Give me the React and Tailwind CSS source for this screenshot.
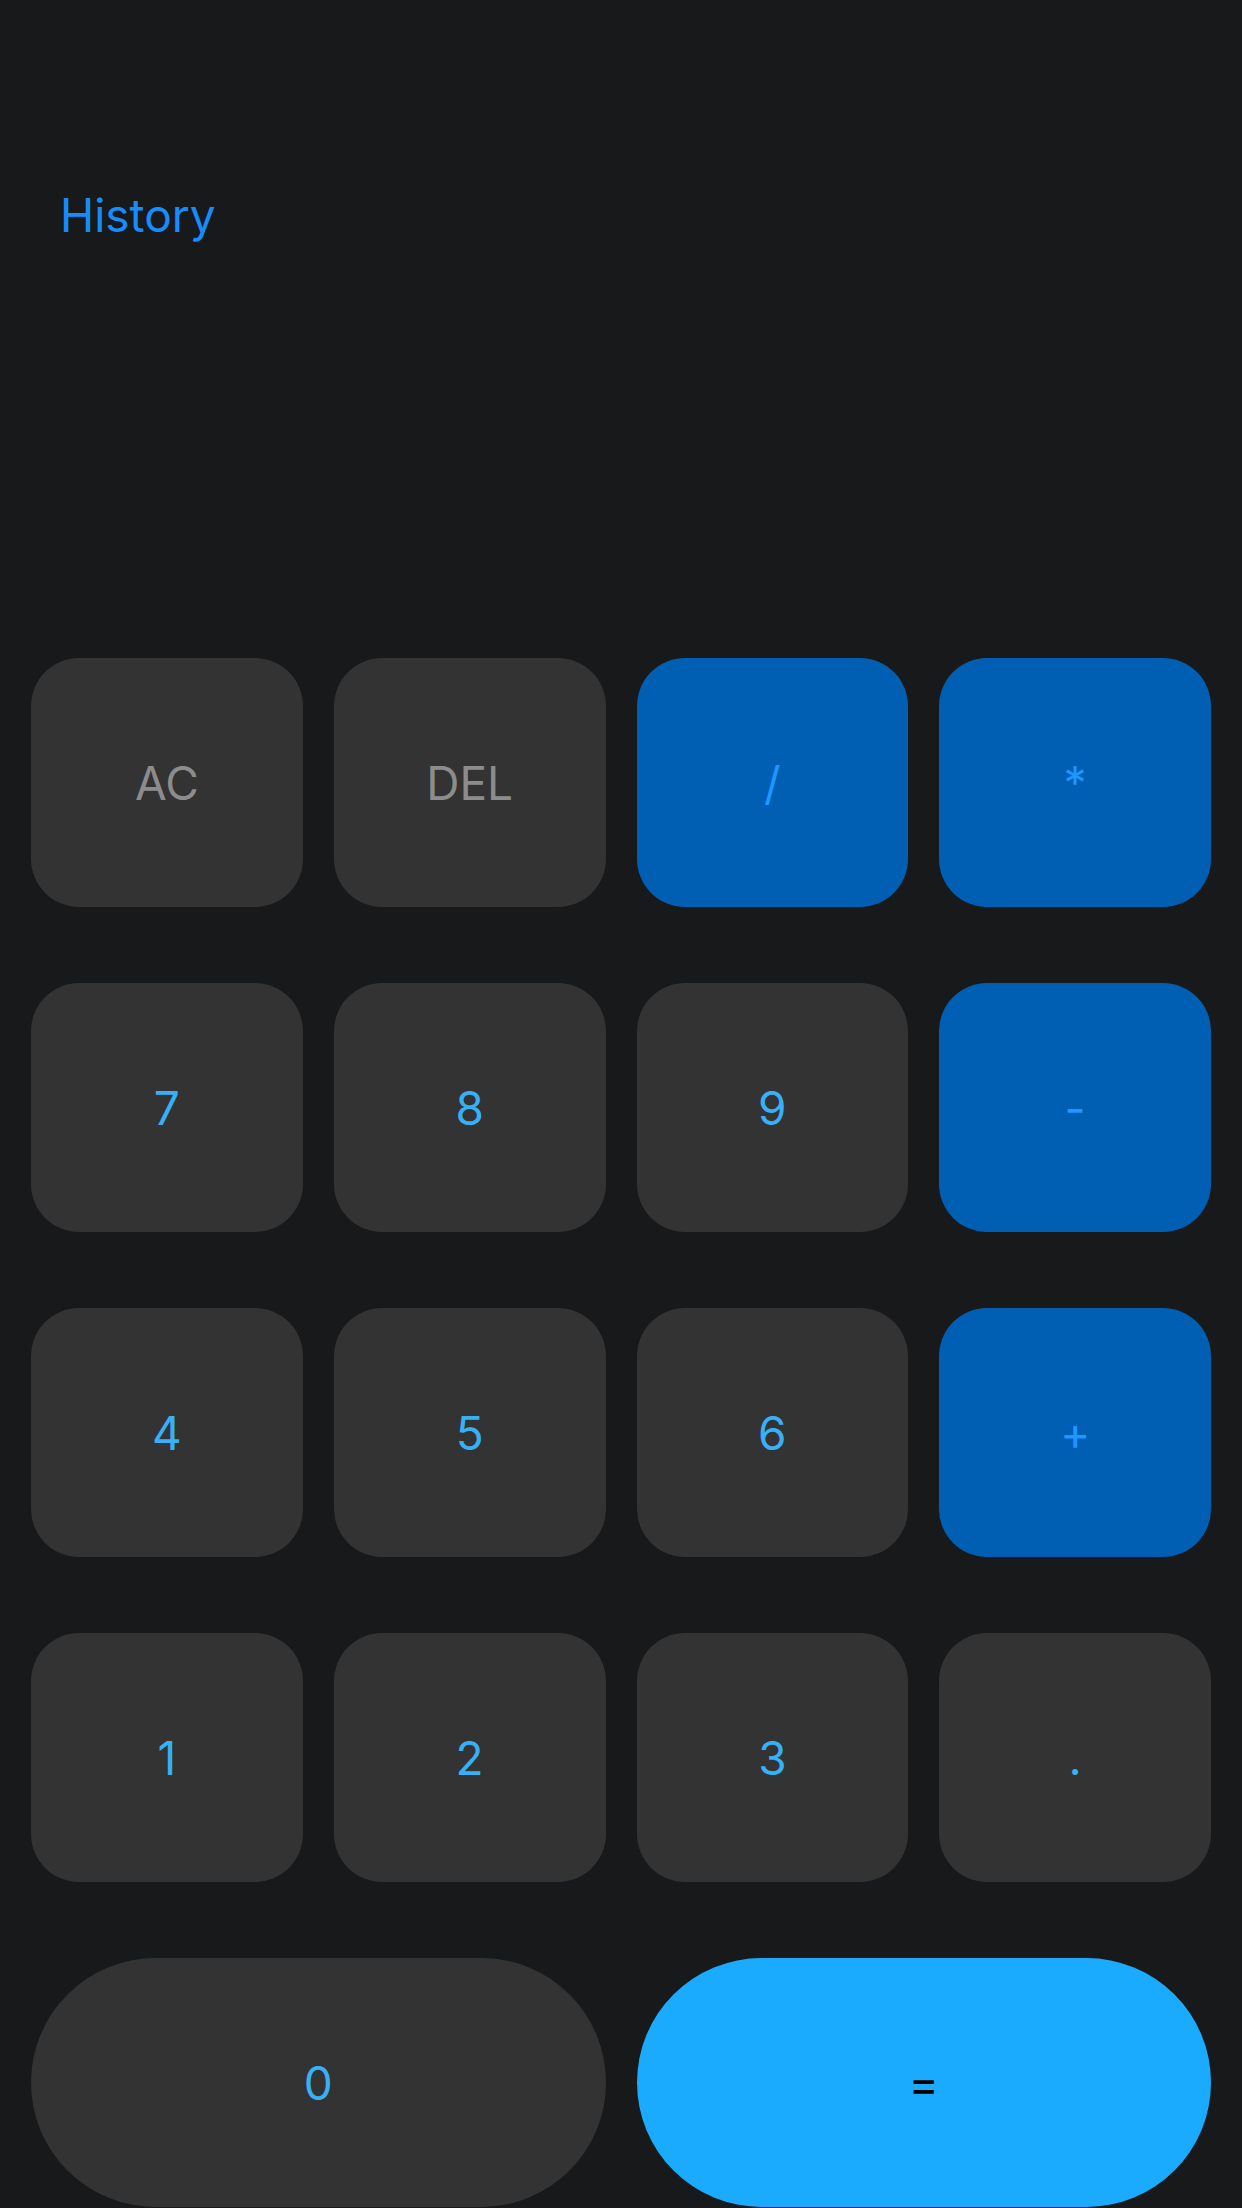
import React from "react";

const keys = [
  { label: "AC", kind: "fn" },
  { label: "DEL", kind: "fn" },
  { label: "/", kind: "op" },
  { label: "*", kind: "op" },
  { label: "7", kind: "num" },
  { label: "8", kind: "num" },
  { label: "9", kind: "num" },
  { label: "-", kind: "op" },
  { label: "4", kind: "num" },
  { label: "5", kind: "num" },
  { label: "6", kind: "num" },
  { label: "+", kind: "op" },
  { label: "1", kind: "num" },
  { label: "2", kind: "num" },
  { label: "3", kind: "num" },
  { label: ".", kind: "num" },
];

const styles = {
  fn: "bg-[#333333] text-[#8c8c8c]",
  num: "bg-[#333333] text-[#38b0f5]",
  op: "bg-[#005fb3] text-[#1e95ff]",
};

function Key({ label, kind }) {
  return (
    <button
      className={`h-[249px] rounded-[48px] flex items-center justify-center text-[46px] leading-none ${styles[kind]}`}
    >
      {label}
    </button>
  );
}

export default function App() {
  return (
    <div
      className="w-[1242px] h-[2208px] bg-[#18191b] flex flex-col overflow-hidden"
      style={{ fontFamily: "Inter, 'Noto Sans', sans-serif" }}
    >
      {/* Header */}
      <div className="pt-[192px] pl-[60px]">
        <span className="text-[46px] leading-none text-[#168cff]">History</span>
      </div>

      {/* Keypad */}
      <div className="mt-[420px] px-[31px] grid grid-cols-4 gap-x-[31px] gap-y-[76px]">
        {keys.map((k) => (
          <Key key={k.label} label={k.label} kind={k.kind} />
        ))}
        <button className="col-span-2 h-[249px] rounded-full bg-[#333333] text-[#38b0f5] text-[46px] leading-none flex items-center justify-center">
          0
        </button>
        <button className="col-span-2 h-[249px] rounded-full bg-[#1aabff] text-black text-[46px] leading-none flex items-center justify-center">
          =
        </button>
      </div>
    </div>
  );
}
